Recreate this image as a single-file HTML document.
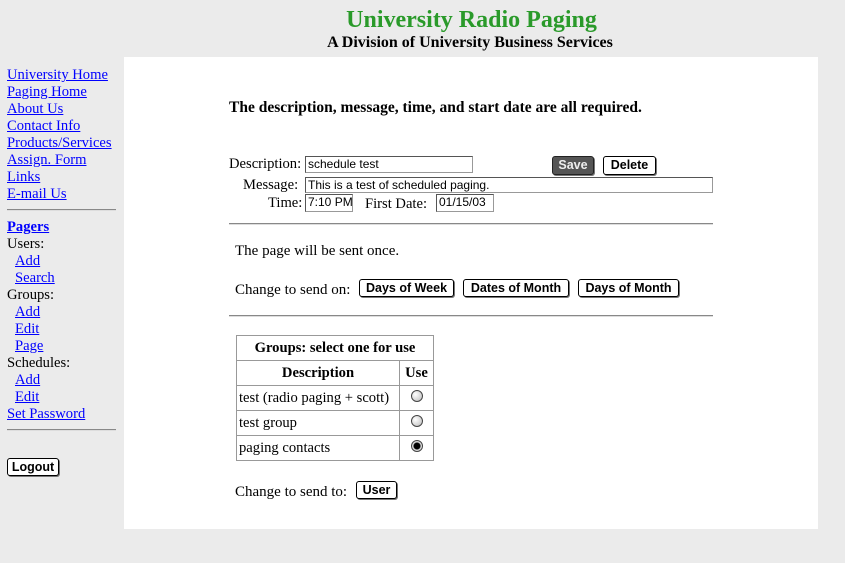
<!DOCTYPE html>
<html><head><meta charset="utf-8"><style>
*{margin:0;padding:0;box-sizing:border-box}
body{width:845px;height:563px;background:#ebebeb;font-family:"Liberation Serif",serif;font-size:15px;color:#000;position:relative;overflow:hidden}
.a{position:absolute;white-space:nowrap;line-height:17px}
.s .a{font-size:14.6px}
a{color:#00f;text-decoration:underline}
.panel{position:absolute;left:124px;top:57px;width:694px;height:472px;background:#fff}
.hr{position:absolute;height:2px;border-top:1px solid #888;border-bottom:1px solid #ddd}
.in{position:absolute;border:1px solid #999;border-top-color:#555;border-left-color:#555;background:#fff;font-family:"Liberation Sans",sans-serif;font-size:12px;line-height:14px;padding-left:2px;white-space:nowrap}
.btn{position:absolute;border:1px solid #000;border-radius:3px;background:#fff;font-family:"Liberation Sans",sans-serif;font-weight:bold;font-size:12.5px;text-align:center;line-height:16px;box-shadow:1px 1px 0 #777}
table{position:absolute;left:236px;top:335px;border-collapse:collapse;border:1px solid #888}
td{border:1px solid #999;height:25px;padding:0 2px;font-size:14.6px}
.r{display:inline-block;width:12px;height:12px;border-radius:50%;border:1px solid #444;background:radial-gradient(circle at 35% 35%,#fff,#bbb)}
</style></head><body>
<div class="a" style="left:0;width:943px;text-align:center;top:6px;font-size:24px;line-height:28px;font-weight:bold;color:#2a9a2a">University Radio Paging</div>
<div class="a" style="left:0;width:940px;text-align:center;top:34px;font-size:16px;font-weight:bold">A Division of University Business Services</div>
<div class="s">
<div class="a" style="left:7px;top:67px"><a>University Home</a></div>
<div class="a" style="left:7px;top:84px"><a>Paging Home</a></div>
<div class="a" style="left:7px;top:101px"><a>About Us</a></div>
<div class="a" style="left:7px;top:118px"><a>Contact Info</a></div>
<div class="a" style="left:7px;top:135px"><a>Products/Services</a></div>
<div class="a" style="left:7px;top:152px"><a>Assign. Form</a></div>
<div class="a" style="left:7px;top:169px"><a>Links</a></div>
<div class="a" style="left:7px;top:186px"><a>E-mail Us</a></div>
<div class="a" style="left:7px;top:219px;font-weight:bold"><a>Pagers</a></div>
<div class="a" style="left:7px;top:236px">Users:</div>
<div class="a" style="left:15px;top:253px"><a>Add</a></div>
<div class="a" style="left:15px;top:270px"><a>Search</a></div>
<div class="a" style="left:7px;top:287px">Groups:</div>
<div class="a" style="left:15px;top:304px"><a>Add</a></div>
<div class="a" style="left:15px;top:321px"><a>Edit</a></div>
<div class="a" style="left:15px;top:338px"><a>Page</a></div>
<div class="a" style="left:7px;top:355px">Schedules:</div>
<div class="a" style="left:15px;top:372px"><a>Add</a></div>
<div class="a" style="left:15px;top:389px"><a>Edit</a></div>
<div class="a" style="left:7px;top:406px"><a>Set Password</a></div>
</div>
<div class="hr" style="left:7px;top:209px;width:109px"></div>
<div class="hr" style="left:7px;top:429px;width:109px"></div>
<div class="btn" style="left:7px;top:458px;width:52px;height:18px">Logout</div>

<div class="panel"></div>
<div class="a" style="left:229px;top:99px;font-weight:bold;font-size:15.5px">The description, message, time, and start date are all required.</div>
<div class="a" style="left:229px;top:156px;font-size:14.6px">Description:</div>
<div class="in" style="left:305px;top:156px;width:168px;height:17px">schedule test</div>
<div class="btn" style="left:552px;top:156px;width:42px;height:19px;background:#555;color:#eee;border-color:#222">Save</div>
<div class="btn" style="left:603px;top:156px;width:53px;height:19px">Delete</div>
<div class="a" style="left:243px;top:177px;font-size:14.6px">Message:</div>
<div class="in" style="left:305px;top:177px;width:408px;height:16px">This is a test of scheduled paging.</div>
<div class="a" style="left:268px;top:195px;font-size:14.6px">Time:</div>
<div class="in" style="left:305px;top:194px;width:48px;height:18px">7:10 PM</div>
<div class="a" style="left:365px;top:196px;font-size:14.6px">First Date:</div>
<div class="in" style="left:436px;top:194px;width:58px;height:18px">01/15/03</div>
<div class="hr" style="left:229px;top:223px;width:484px"></div>
<div class="a" style="left:235px;top:243px">The page will be sent once.</div>
<div class="a" style="left:235px;top:282px">Change to send on:</div>
<div class="btn" style="left:359px;top:279px;width:95px;height:18px">Days of Week</div>
<div class="btn" style="left:463px;top:279px;width:106px;height:18px">Dates of Month</div>
<div class="btn" style="left:578px;top:279px;width:101px;height:18px">Days of Month</div>
<div class="hr" style="left:229px;top:315px;width:484px"></div>
<table>
<tr><td colspan="2" style="text-align:center;font-weight:bold">Groups: select one for use</td></tr>
<tr><td style="text-align:center;font-weight:bold;width:163px">Description</td><td style="text-align:center;font-weight:bold;width:34px">Use</td></tr>
<tr><td>test (radio paging + scott)</td><td style="text-align:center"><span class="r"></span></td></tr>
<tr><td>test group</td><td style="text-align:center"><span class="r"></span></td></tr>
<tr><td>paging contacts</td><td style="text-align:center"><span class="r" style="background:radial-gradient(circle,#000 3px,#ddd 4px)"></span></td></tr>
</table>
<div class="a" style="left:235px;top:484px">Change to send to:</div>
<div class="btn" style="left:356px;top:481px;width:41px;height:18px">User</div>
</body></html>
